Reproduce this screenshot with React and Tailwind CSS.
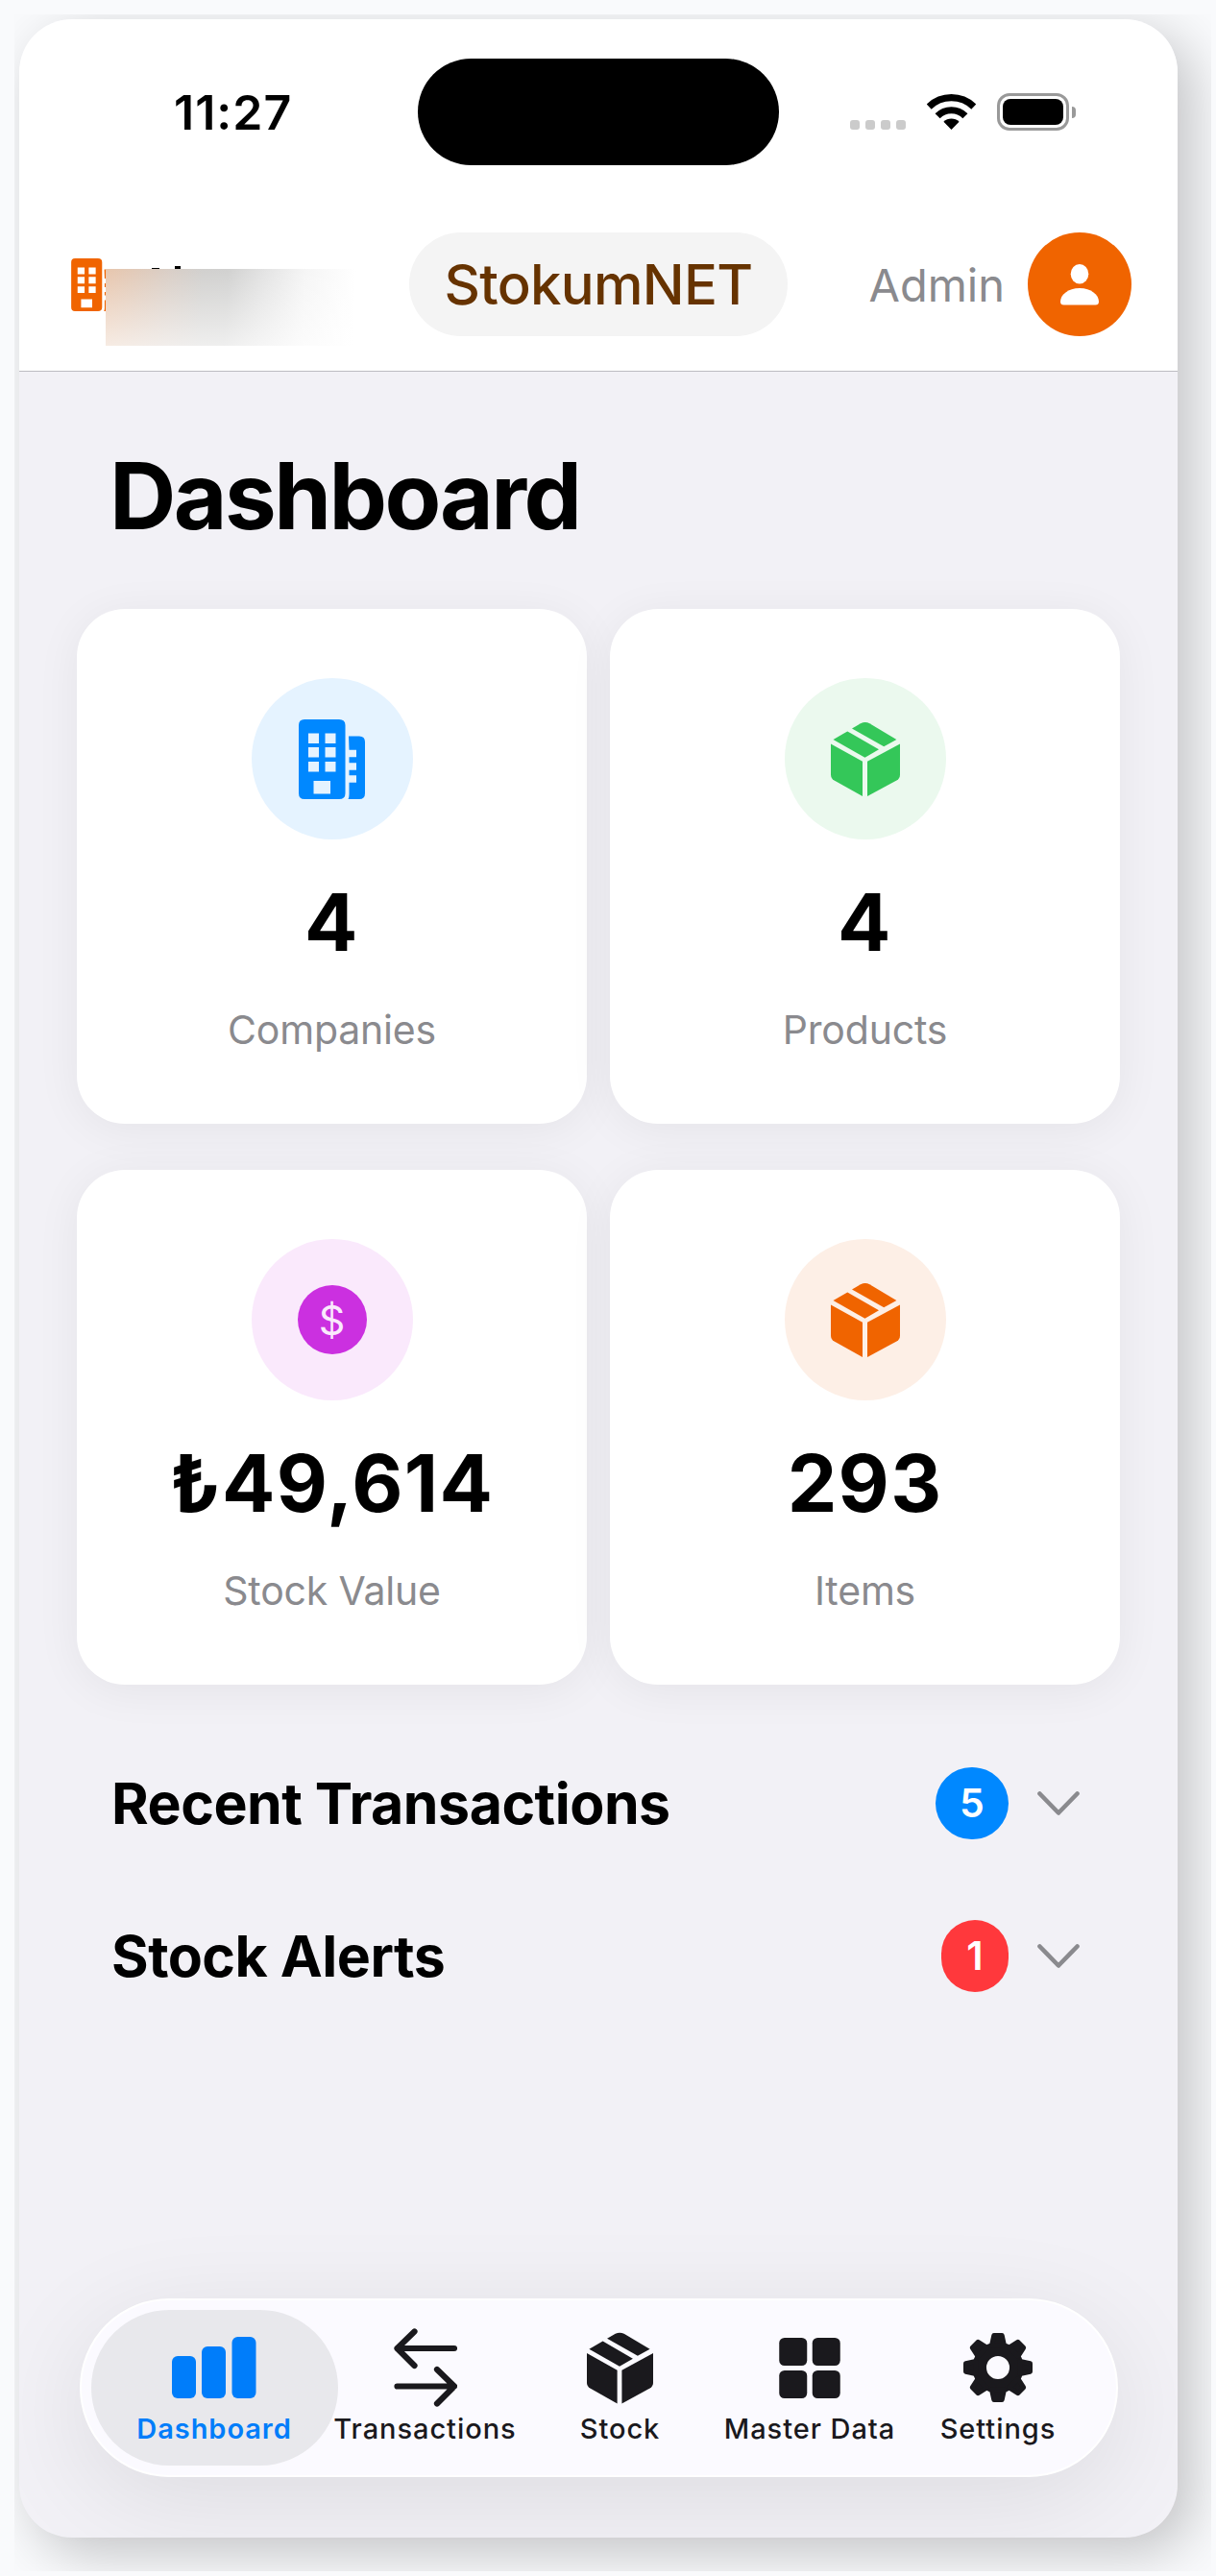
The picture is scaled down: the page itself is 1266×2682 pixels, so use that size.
import React from 'react'

function BuildingIcon({ className }) {
  return (
    <svg viewBox="0 0 69 83" className={className} fill="currentColor">
      <path
        fillRule="evenodd"
        d="M6 0H42Q48.5 0 48.5 6V77Q48.5 83 42 83H6Q0 83 0 77V6Q0 0 6 0ZM10 14.5V25H21V14.5ZM27.5 14.5V25H38.5V14.5ZM10 29V39.5H21V29ZM27.5 29V39.5H38.5V29ZM10 44V54.5H21V44ZM27.5 44V54.5H38.5V44ZM15.5 64V77.5H33V64Z"
      />
      <path d="M52 17.5H63Q69 17.5 69 23.5V77Q69 83 63 83H51.5Q52.5 81 52.5 78V65.7H60V58.2H52.5V52.7H60V45.3H52.5V39.3H60V31.8H52.5Z" />
    </svg>
  )
}

function BoxIcon({ className }) {
  return (
    <svg viewBox="0 0 72 77" className={className} fill="currentColor">
      <path d="M0 22.4L33 40.8V77L3.5 60.5Q0 58.5 0 54.5Z" />
      <path d="M72 22.4L38 40.8V77L68.5 60.5Q72 58.5 72 54.5Z" />
      <path d="M2.5 18L17.3 9.4L50 28.2L35.5 36.7Z" />
      <path d="M22 6.5L31 1.3Q35.7 -1.2 40.4 1.3L68.4 18L55.2 25.3Z" />
    </svg>
  )
}

function DollarIcon() {
  return (
    <span className="flex size-[72px] items-center justify-center rounded-full bg-[#cb30e0] text-[43px] leading-none text-[#fae9fc]">
      $
    </span>
  )
}

function WifiIcon() {
  return (
    <svg viewBox="0 0 51 37" className="h-[37px] w-[51px]" fill="none" stroke="#000">
      <path d="M2.2 13.1A33.5 33.5 0 0 1 48.8 13.1" strokeWidth="7.2" />
      <path d="M11.1 22.7A20.4 20.4 0 0 1 39.9 22.7" strokeWidth="7.2" />
      <path d="M25.5 37L17.4 28.8A11.7 11.7 0 0 1 33.6 28.8Z" fill="#000" stroke="none" />
    </svg>
  )
}

function BarsIcon() {
  return (
    <svg viewBox="0 0 88 64" className="h-[64px] w-[88px]" fill="currentColor">
      <rect x="0" y="20" width="25" height="44" rx="6" />
      <rect x="31" y="10" width="25" height="54" rx="6" />
      <rect x="62.500" y="0" width="25" height="64" rx="6" />
    </svg>
  )
}

function TransferIcon() {
  return (
    <svg
      viewBox="0 0 66 82"
      className="h-[82px] w-[66px]"
      fill="none"
      stroke="currentColor"
      strokeWidth="6.2"
      strokeLinecap="round"
      strokeLinejoin="round"
    >
      <path d="M63 21H3.500M21.500 3.500L3.500 21L21.500 39" />
      <path d="M3.500 60.500H63M45 43L63 60.500L45 78.500" />
    </svg>
  )
}

function GridIcon() {
  return (
    <svg viewBox="0 0 63.5 63" className="h-[63px] w-[64px]" fill="currentColor">
      <rect x="0" y="0" width="29" height="29" rx="5.500" />
      <rect x="34.500" y="0" width="29" height="29" rx="5.500" />
      <rect x="0" y="34" width="29" height="29" rx="5.500" />
      <rect x="34.500" y="34" width="29" height="29" rx="5.500" />
    </svg>
  )
}

function GearIcon() {
  return (
    <svg viewBox="0 0 72 72" className="size-[72px]" fill="currentColor" stroke="currentColor">
      <circle cx="36" cy="36" r="19.300" fill="none" strokeWidth="14.500" />
      {[0, 45, 90, 135, 180, 225, 270, 315].map((deg) => (
        <path
          key={deg}
          d="M31.800 2.500H40.200L42.500 13H29.500Z"
          strokeWidth="5"
          strokeLinejoin="round"
          transform={`rotate(${deg} 36 36)`}
        />
      ))}
    </svg>
  )
}

const stats = [
  { label: 'Companies', value: '4', tint: 'bg-[#e5f3ff]', icon: <BuildingIcon className="h-[83px] w-[69px] text-[#0088ff]" /> },
  { label: 'Products', value: '4', tint: 'bg-[#ebf9ee]', icon: <BoxIcon className="h-[77px] w-[72px] text-[#34c759]" /> },
  { label: 'Stock Value', value: '₺49,614', tint: 'bg-[#fae9fc]', icon: <DollarIcon /> },
  { label: 'Items', value: '293', tint: 'bg-[#fdefe6]', icon: <BoxIcon className="h-[77px] w-[72px] text-[#f06400]" /> },
]

const sections = [
  { title: 'Recent Transactions', count: 5, badge: 'w-[76px] bg-[#0088ff]' },
  { title: 'Stock Alerts', count: 1, badge: 'w-[70px] bg-[#ff383c]' },
]

const tabs = [
  { label: 'Dashboard', width: 'w-[257px] rounded-full bg-[#e8e8ec] text-[#007dfa] font-semibold', icon: <BarsIcon /> },
  { label: 'Transactions', width: 'w-[182px] font-medium', icon: <TransferIcon /> },
  { label: 'Stock', width: 'w-[224px] font-medium', icon: <BoxIcon className="h-[75px] w-[69px]" /> },
  { label: 'Master Data', width: 'w-[171px] font-medium', icon: <GridIcon /> },
  { label: 'Settings', width: 'w-[221px] font-medium', icon: <GearIcon /> },
]

function StatusBar() {
  return (
    <div className="flex h-[111px] items-center pr-[106px] pl-[161px]">
      <span className="w-[254px] text-[50px] leading-none font-semibold tracking-[1px]">11:27</span>
      <div className="h-[111px] w-[376px] rounded-full bg-black" />
      {/* Signal, wifi, battery */}
      <div className="ml-auto flex items-center">
        <div className="mt-[27px] flex gap-[6px]">
          {[0, 1, 2, 3].map((i) => (
            <span key={i} className="size-[10px] rounded-[3px] bg-[#cbcbcb]" />
          ))}
        </div>
        <div className="mr-[22px] ml-[22px]">
          <WifiIcon />
        </div>
        <div className="h-[39px] w-[75px] rounded-[13px] border-3 border-[#999] p-[3px]">
          <div className="h-full rounded-[8px] bg-black" />
        </div>
        <div className="ml-[3px] h-[12px] w-[4px] rounded-r-full bg-[#999]" />
      </div>
    </div>
  )
}

function Header() {
  return (
    <header className="h-[367px] border-b border-[#bdbcc1] bg-white pt-[41px]">
      <StatusBar />
      <div className="mt-[70px] flex h-[108px] items-center pr-[48px] pl-[54px]">
        <div className="relative w-[352px]">
          <BuildingIcon className="h-[55px] w-[46px] text-[#f06400]" />
          {/* Company name is covered */}
          <span className="absolute top-[10px] left-[84px] h-[2px] w-[8px] bg-black" />
          <span className="absolute top-[8px] left-[108px] h-[4px] w-[6px] bg-black" />
          <div className="absolute top-[11px] left-[36px] h-[80px] w-[262px] bg-[linear-gradient(93deg,#e8c6ad_0%,#d9cec6_25%,#d1d0ce_38%,#d1d1d0_48%,#e3e3e3_62%,#f5f5f5_78%,#ffffff_98%)]">
            <div className="h-full bg-gradient-to-b from-white/0 to-white/65" />
          </div>
        </div>
        <div className="flex h-[108px] w-[394px] items-center justify-center rounded-full bg-[#f4f4f4] text-[58px] leading-none font-medium tracking-[-0.700px] text-[#663300]">
          StokumNET
        </div>
        <span className="ml-auto text-[47px] leading-none text-[#8a8a8e]">Admin</span>
        <div className="ml-[24px] flex size-[108px] items-center justify-center rounded-full bg-[#f06400]">
          <svg viewBox="0 0 40 43" className="h-[43px] w-[40px]" fill="#fff">
            <ellipse cx="20" cy="10.200" rx="9.300" ry="10.200" />
            <path d="M0 39C0 32 8 25 20 25S40 32 40 39Q40 42.500 36.500 42.500H3.500Q0 42.500 0 39Z" />
          </svg>
        </div>
      </div>
    </header>
  )
}

function StatCard({ label, value, tint, icon }) {
  return (
    <div className="flex h-[536px] flex-col items-center rounded-[50px] bg-white pt-[72px] shadow-[0_6px_48px_rgba(0,0,0,0.06)]">
      <div className={`flex size-[168px] shrink-0 items-center justify-center rounded-full ${tint}`}>{icon}</div>
      <div className="mt-[46px] text-[82px] leading-none font-bold tracking-[1.300px]">{value}</div>
      <div className="mt-[50px] text-[41px] leading-none tracking-[-0.200px] text-[#8a8a8e]">{label}</div>
    </div>
  )
}

function SectionRow({ title, count, badge }) {
  return (
    <div className="flex h-[75px] items-center">
      <h2 className="text-[59px] leading-none font-bold tracking-[-0.500px]">{title}</h2>
      <span
        className={`ml-auto flex h-[75px] items-center justify-center rounded-full text-[41px] leading-none font-semibold text-white ${badge}`}
      >
        {count}
      </span>
      <svg viewBox="0 0 44 26" className="ml-[30px] h-[26px] w-[44px]" fill="none" stroke="#8a8a8e">
        <path d="M2.500 2.500L22 22.500L41.500 2.500" strokeWidth="4.600" strokeLinecap="round" strokeLinejoin="round" />
      </svg>
    </div>
  )
}

function TabBar() {
  return (
    <nav className="mx-auto flex h-[186px] w-[1081px] rounded-full border-2 border-white bg-[#fbfaff] p-[10px] text-[#1a191d] shadow-[0_24px_110px_rgba(0,0,0,0.09)]">
      {tabs.map((tab) => (
        <div key={tab.label} className={`flex h-[162px] shrink-0 flex-col items-center ${tab.width}`}>
          <div className="flex h-[120px] items-center justify-center">{tab.icon}</div>
          <span className="-mt-[11px] text-[29px] leading-none tracking-[0.950px] whitespace-nowrap">{tab.label}</span>
        </div>
      ))}
    </nav>
  )
}

export default function App() {
  return (
    <div className="h-[2682px] w-[1266px] bg-[#f9fafc] pt-[15px] pl-[15px] font-['Inter',sans-serif] text-black">
      <div className="h-[2662px] w-[1246px] overflow-hidden pt-[5px] pl-[5px]">
        <div className="h-[2622px] w-[1206px] overflow-hidden rounded-[55px] bg-[#f2f1f6] shadow-[16px_16px_56px_rgba(0,0,0,0.22)]">
          <Header />
          <h1 className="pt-[81px] pl-[94px] text-[96px] leading-none font-bold tracking-[-2.500px]">Dashboard</h1>
          <div className="mt-[70px] grid grid-cols-2 gap-x-[24px] gap-y-[48px] px-[60px]">
            {stats.map((stat) => (
              <StatCard key={stat.label} {...stat} />
            ))}
          </div>
          <div className="mt-[86px] mb-[319px] flex flex-col gap-[84px] pr-[102px] pl-[96px]">
            {sections.map((section) => (
              <SectionRow key={section.title} {...section} />
            ))}
          </div>
          <TabBar />
        </div>
      </div>
    </div>
  )
}
